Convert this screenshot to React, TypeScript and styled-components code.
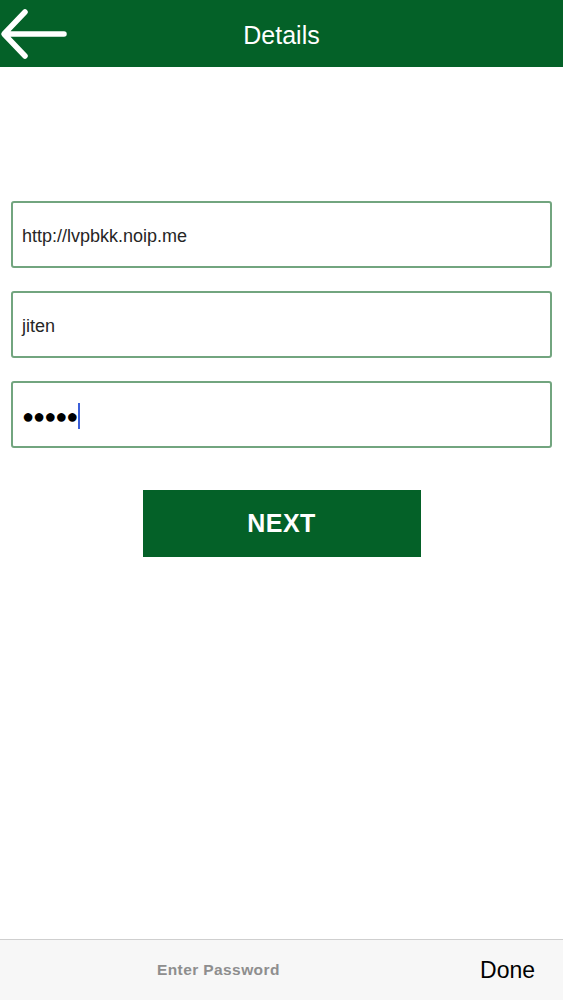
import React from 'react';
import styled, { createGlobalStyle } from 'styled-components';

const GlobalStyle = createGlobalStyle`
  html, body {
    margin: 0;
    padding: 0;
    background: #ffffff;
    font-family: "Liberation Sans", Arial, sans-serif;
  }
`;

const GREEN = '#046128';

const Screen = styled.div`
  width: 563px;
  height: 1000px;
  display: flex;
  flex-direction: column;
  background: #ffffff;
`;

const Header = styled.header`
  position: relative;
  height: 67px;
  background: ${GREEN};
  display: flex;
  align-items: center;
  justify-content: center;
  flex-shrink: 0;
`;

const BackButton = styled.button`
  position: absolute;
  left: 0;
  top: 8px;
  width: 70px;
  height: 52px;
  padding: 0;
  border: none;
  background: transparent;
  display: flex;
  align-items: center;
`;

const Title = styled.h1`
  margin: 4px 0 0;
  color: #ffffff;
  font-size: 25px;
  font-weight: 400;
  font-family: "Liberation Sans", Arial, sans-serif;
`;

const Form = styled.main`
  flex: 1;
  display: flex;
  flex-direction: column;
  padding: 134px 11px 0;
  gap: 23px;
`;

const Field = styled.div`
  height: 67px;
  box-sizing: border-box;
  border: 2px solid #72a57f;
  border-radius: 3px;
  display: flex;
  align-items: center;
  padding: 3px 9px 0;
  font-size: 18px;
  color: #262626;
`;

const Dots = styled.span`
  font-size: 20px;
  letter-spacing: -1px;
  color: #000000;
`;

const Caret = styled.span`
  display: inline-block;
  width: 2px;
  height: 26px;
  background: #3b5fd9;
  margin-left: 1px;
`;

const ButtonRow = styled.div`
  display: flex;
  justify-content: center;
  margin-top: 19px;
`;

const NextButton = styled.button`
  width: 278px;
  height: 67px;
  background: ${GREEN};
  color: #ffffff;
  border: none;
  font-family: "Liberation Sans", Arial, sans-serif;
  font-weight: 700;
  font-size: 25px;
  letter-spacing: 0.5px;
`;

const Toolbar = styled.footer`
  height: 61px;
  flex-shrink: 0;
  box-sizing: border-box;
  border-top: 1px solid #cfcfcf;
  background: #f7f7f7;
  display: flex;
  align-items: center;
  padding: 0 28px 0 157px;
`;

const Hint = styled.span`
  flex: 1;
  color: #8e8e8e;
  font-size: 15.5px;
  font-weight: 700;
  letter-spacing: 0.4px;
`;

const Done = styled.span`
  color: #000000;
  font-size: 23px;
  font-weight: 400;
`;

const BackArrow = () => (
  <svg width="68" height="52" viewBox="0 0 68 52">
    <path
      d="M64 26 H5 M25 4 L4 26 L25 48"
      fill="none"
      stroke="#ffffff"
      strokeWidth="5.5"
      strokeLinecap="round"
      strokeLinejoin="round"
    />
  </svg>
);

export default function App() {
  return (
    <>
      <GlobalStyle />
      <Screen>
        <Header>
          <BackButton aria-label="Back">
            <BackArrow />
          </BackButton>
          <Title>Details</Title>
        </Header>
        <Form>
          <Field>http://lvpbkk.noip.me</Field>
          <Field>jiten</Field>
          <Field>
            <Dots>●●●●●</Dots>
            <Caret />
          </Field>
          <ButtonRow>
            <NextButton>NEXT</NextButton>
          </ButtonRow>
        </Form>
        <Toolbar>
          <Hint>Enter Password</Hint>
          <Done>Done</Done>
        </Toolbar>
      </Screen>
    </>
  );
}
